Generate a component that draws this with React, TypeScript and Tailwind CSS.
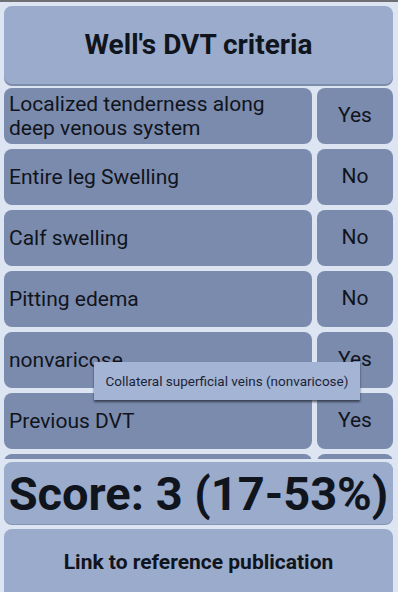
const rows = [
  { label: 'Localized tenderness along deep venous system', value: 'Yes' },
  { label: 'Entire leg Swelling', value: 'No' },
  { label: 'Calf swelling', value: 'No' },
  { label: 'Pitting edema', value: 'No' },
  { label: 'nonvaricose', value: 'Yes' },
  { label: 'Previous DVT', value: 'Yes' },
  // next row peeks out under the score bar, text is scrolled out of view
  { label: '', value: '' },
]

export default function App() {
  return (
    <div className="relative h-[592px] w-[398px] overflow-hidden bg-[#dde5f2] font-['Roboto',sans-serif] text-[#10141c]">
      <div className="h-[2px] bg-[#6e7076]" />

      <div className="ml-[4px] mr-[5px] mt-[4px] flex h-[78px] items-center justify-center rounded-[8px] bg-[#9aabcb] shadow-[0_2px_0_#7d8cab]">
        <h1 className="text-[28px] font-bold">Well's DVT criteria</h1>
      </div>

      {/* scrolling list, clipped under the score bar */}
      <div className="mt-[4px] h-[371px] overflow-hidden">
        <div className="flex flex-col gap-[5px] pl-[4px] pr-[5px]">
          {rows.map((row, i) => (
            <div key={i} className="flex h-[56px] gap-[5px]">
              <div className="flex flex-1 items-center rounded-[8px] bg-[#7b8bad] pl-[5px] pr-3 text-[21px] leading-[24px]">
                {row.label}
              </div>
              <div className="flex w-[76px] items-center justify-center rounded-[8px] bg-[#7b8bad] text-[21px]">
                {row.value}
              </div>
            </div>
          ))}
        </div>
      </div>

      <div className="ml-[4px] mr-[5px] mt-[3px] flex h-[62px] items-center justify-center overflow-hidden rounded-[8px] bg-[#9aabcb] shadow-[0_1px_0_#8494b4]">
        <span className="whitespace-nowrap text-[47px] font-bold leading-none">Score: 3 (17-53%)</span>
      </div>

      <div className="ml-[4px] mr-[5px] mt-[5px] flex h-[70px] items-start justify-center rounded-[8px] bg-[#9aabcb] pt-[18px]">
        <span className="text-[21px] font-bold">Link to reference publication</span>
      </div>

      {/* tooltip */}
      <div className="absolute left-[94px] top-[362px] flex h-[38px] w-[266px] items-center justify-center bg-[#a4b4d4] text-[13.5px] text-[#1c2438] shadow-[0_2px_2px_rgba(30,36,50,0.7)]">
        Collateral superficial veins (nonvaricose)
      </div>
    </div>
  )
}
